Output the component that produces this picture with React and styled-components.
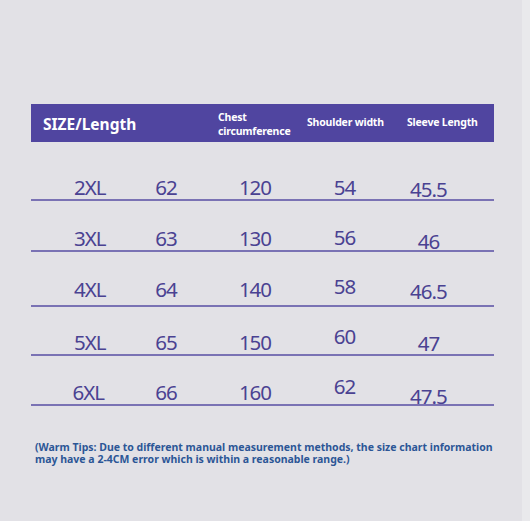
import React from 'react';
import styled, { createGlobalStyle } from 'styled-components';

const GlobalStyle = createGlobalStyle`
    html, body {
        margin: 0;
        padding: 0;
    }
    body {
        background: linear-gradient(to right, #e2e1e6 522px, #e9e9ec 522px);
        font-family: "Noto Sans", "Open Sans", sans-serif;
    }
`;

const columns = '77.4px 75.2px 102.8px 76.2px 91.8px';

const rows = [
    { height: 57, cells: [['2XL', 4], ['62', 4], ['120', 4], ['54', 4], ['45.5', 2.5]] },
    { height: 49, cells: [['3XL', 4.5], ['63', 4.5], ['130', 4.5], ['56', 5.5], ['46', 1]] },
    { height: 53, cells: [['4XL', 8], ['64', 8], ['140', 8], ['58', 11.5], ['46.5', 6]] },
    { height: 47, cells: [['5XL', 4.5], ['65', 4.5], ['150', 4.5], ['60', 10], ['47', 3]] },
    { height: 48, cells: [['6XL', 4, -1.5], ['66', 4], ['160', 4], ['62', 10], ['47.5', 0.5]] }
];

function App() {
    return (
        <>
            <GlobalStyle />
            <PageStyled>
                <Table>
                    <Header>
                        <HeadTitle>SIZE/Length</HeadTitle>
                        <HeadCell $shift={3}>
                            Chest
                            <br />
                            circumference
                        </HeadCell>
                        <HeadCell>Shoulder width</HeadCell>
                        <HeadCell>Sleeve Length</HeadCell>
                    </Header>
                    {rows.map((row, i) => (
                        <Row key={i} $height={row.height}>
                            {row.cells.map(([text, lift, dx = 0], j) => (
                                <Cell key={j} $lift={lift} $dx={dx}>
                                    {text}
                                </Cell>
                            ))}
                        </Row>
                    ))}
                </Table>
                <Tips>
                    <TipLine>(Warm Tips: Due to different manual measurement methods, the size chart information</TipLine>
                    <TipLine>may have a 2-4CM error which is within a reasonable range.)</TipLine>
                </Tips>
            </PageStyled>
        </>
    );
}

const PageStyled = styled.div`
    width: 530px;
    height: 521px;
    box-sizing: border-box;
    padding: 104px 0 0 31px;
    overflow: hidden;
`;

const Table = styled.div`
    width: 463px;
`;

const Header = styled.div`
    height: 38px;
    box-sizing: border-box;
    padding-left: 12px;
    background: #5045a0;
    display: grid;
    grid-template-columns: 175px 89px 100px 1fr;
    align-items: center;
    color: #fff;
    font-weight: 700;
`;

const HeadTitle = styled.div`
    font-size: 15.5px;
    line-height: 18px;
    padding-top: 2px;
`;

const HeadCell = styled.div`
    font-size: 10.5px;
    line-height: 13.5px;
    letter-spacing: -0.2px;
    white-space: nowrap;
    margin-top: ${p => p.$shift || 0}px;
`;

const Row = styled.div`
    height: ${p => p.$height}px;
    border-bottom: 2px solid #7a72b4;
    display: grid;
    grid-template-columns: ${columns};
    padding-left: 20px;
    align-items: end;
`;

const Cell = styled.div`
    text-align: center;
    font-size: 20.5px;
    line-height: 20px;
    letter-spacing: -1px;
    color: #4a4292;
    transform: translate(${p => p.$dx}px, ${p => 2.3 - p.$lift}px);
`;

const Tips = styled.div`
    margin-top: 35px;
    padding-left: 4px;
    display: flex;
    flex-direction: column;
    font-size: 10.5px;
    font-weight: 700;
    color: #2c5696;
    white-space: nowrap;
`;

const TipLine = styled.div`
    height: 12px;
    line-height: 12px;
`;

export default App;
